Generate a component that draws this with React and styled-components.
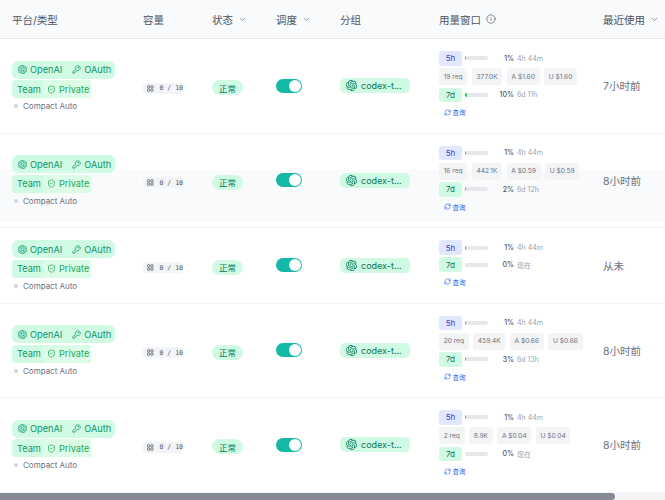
import styled, { createGlobalStyle } from "styled-components";
import { SiOpenai } from "react-icons/si";
import { KeyRound, ShieldCheck, ChevronDown, Info, RefreshCw } from "lucide-react";

const accounts = [
    { last: "7小时前", stats: ["19 req", "377.0K", "A $1.60", "U $1.60"], week: { pct: 10, label: "10%", time: "6d 11h" } },
    { last: "8小时前", stats: ["16 req", "442.1K", "A $0.59", "U $0.59"], week: { pct: 2, label: "2%", time: "6d 12h" }, striped: true },
    { last: "从未", week: { pct: 0, label: "0%", time: "现在" } },
    { last: "8小时前", stats: ["20 req", "459.4K", "A $0.66", "U $0.66"], week: { pct: 3, label: "3%", time: "6d 13h" } },
    { last: "8小时前", stats: ["2 req", "8.9K", "A $0.04", "U $0.04"], week: { pct: 0, label: "0%", time: "现在" } },
];

function SlotsIcon() {
    return (
        <svg width="7" height="7" viewBox="0 0 14 14" fill="none" stroke="currentColor" strokeWidth="1.6">
            <rect x="1" y="1" width="5" height="5" rx="1.5" />
            <rect x="8" y="1" width="5" height="5" rx="1.5" />
            <rect x="1" y="8" width="5" height="5" rx="1.5" />
            <rect x="8" y="8" width="5" height="5" rx="1.5" />
        </svg>
    );
}

export default function App() {
    return (
        <Page>
            <Global />
            <HeaderRow>
                <HeaderCell>平台/类型</HeaderCell>
                <HeaderCell>容量</HeaderCell>
                <HeaderCell>状态 <ChevronDown size={9} /></HeaderCell>
                <HeaderCell>调度 <ChevronDown size={9} /></HeaderCell>
                <HeaderCell>分组</HeaderCell>
                <HeaderCell>用量窗口 <Info size={10} /></HeaderCell>
                <HeaderCell>最近使用 <ChevronDown size={9} /></HeaderCell>
            </HeaderRow>
            {accounts.map((account, i) => (
                <Row key={i} $striped={account.striped}>
                    <Platform>
                        <PillTop>
                            <PillPart><SiOpenai size={9} /> OpenAI</PillPart>
                            <PillPart><KeyRound size={9} /> OAuth</PillPart>
                        </PillTop>
                        <PillBottom>
                            <TeamPart>Team</TeamPart>
                            <PrivatePart><ShieldCheck size={9} /> Private</PrivatePart>
                        </PillBottom>
                        <Compact><Dot />Compact Auto</Compact>
                    </Platform>
                    <div>
                        <Capacity><SlotsIcon /> 0 / 10</Capacity>
                    </div>
                    <div><Status>正常</Status></div>
                    <div><Toggle><Knob /></Toggle></div>
                    <div><Group><SiOpenai size={11} /> codex-t...</Group></div>
                    <Usage>
                        <UsageLine>
                            <WindowTag>5h</WindowTag>
                            <Bar><Fill $pct={1} style={{ width: "1%" }} /></Bar>
                            <Percent>1%</Percent>
                            <Reset>4h 44m</Reset>
                        </UsageLine>
                        {account.stats && (
                            <Stats>
                                {account.stats.map(stat => <Stat key={stat}>{stat}</Stat>)}
                            </Stats>
                        )}
                        <UsageLine>
                            <WindowTag $week>7d</WindowTag>
                            <Bar><Fill $pct={account.week.pct} style={{ width: `${account.week.pct}%` }} /></Bar>
                            <Percent>{account.week.label}</Percent>
                            <Reset>{account.week.time}</Reset>
                        </UsageLine>
                        <Query><RefreshCw size={7} /> 查询</Query>
                    </Usage>
                    <Last>{account.last}</Last>
                </Row>
            ))}
            <ScrollTrack><ScrollThumb /></ScrollTrack>
        </Page>
    );
}

const Global = createGlobalStyle`
    html, body {
        margin: 0;
        overflow: hidden;
        background: #fff;
    }
    * {
        box-sizing: border-box;
    }
`;

const Page = styled.div`
    width: 665px;
    height: 500px;
    display: flex;
    flex-direction: column;
    font-family: Inter, "Noto Sans CJK SC", sans-serif;
`;

const columns = "131px 69px 64px 64px 99px 164px 62px";

const HeaderRow = styled.div`
    flex: none;
    height: 39px;
    padding-left: 12px;
    display: grid;
    grid-template-columns: ${columns};
    align-items: center;
    background: #f9fafb;
    border-bottom: 1px solid #e5e7eb;
`;

const HeaderCell = styled.div`
    display: flex;
    align-items: center;
    gap: 5px;
    font-size: 10.5px;
    color: #4b5563;
    white-space: nowrap;

    svg {
        color: #6b7280;
    }
`;

const Row = styled.div`
    flex: none;
    padding: 12px 0 12px 12px;
    display: grid;
    grid-template-columns: ${columns};
    align-items: center;
    border-bottom: 1px solid #f3f4f6;
    background: ${p => p.$striped
        ? "linear-gradient(#fff 36px, #f9fafb 36px, #f9fafb 88px, #fff 88px)"
        : "#fff"};
`;

const Platform = styled.div`
    display: flex;
    flex-direction: column;
    align-items: flex-start;
`;

const PillTop = styled.div`
    height: 18px;
    padding: 0 4px 0 6px;
    display: flex;
    align-items: center;
    gap: 10px;
    border-radius: 6px;
    background: #d1fae5;
    color: #059669;
    font-size: 9.2px;
`;

const PillPart = styled.span`
    display: flex;
    align-items: center;
    gap: 3px;
`;

const PillBottom = styled.div`
    margin-top: 1.5px;
    height: 18px;
    display: flex;
    font-size: 9.2px;
`;

const TeamPart = styled.span`
    width: 31px;
    padding-left: 5px;
    display: flex;
    align-items: center;
    border-radius: 4px 0 0 4px;
    background: #d1fae5;
    color: #15965f;
`;

const PrivatePart = styled.span`
    width: 48px;
    padding-left: 4px;
    display: flex;
    align-items: center;
    gap: 3px;
    background: #dcfce7;
    color: #22a855;
`;

const Compact = styled.div`
    margin-top: 3px;
    height: 10px;
    display: flex;
    align-items: center;
    gap: 5px;
    font-size: 8px;
    color: #6b7280;
`;

const Dot = styled.span`
    width: 4px;
    height: 4px;
    margin-left: 2px;
    border-radius: 50%;
    background: #cbd5e1;
`;

const Capacity = styled.span`
    width: 40px;
    height: 11px;
    padding-left: 4px;
    display: inline-flex;
    align-items: center;
    gap: 2px;
    border-radius: 4px;
    background: #f3f4f6;
    color: #4b5563;
    font-family: "DejaVu Sans Mono", monospace;
    font-size: 6.5px;
    white-space: pre;
`;

const Status = styled.span`
    width: 31px;
    height: 15px;
    display: inline-flex;
    align-items: center;
    justify-content: center;
    border-radius: 8px;
    background: #d1fae5;
    color: #047857;
    font-size: 8.5px;
`;

const Toggle = styled.span`
    width: 26px;
    height: 14px;
    padding: 1px;
    display: flex;
    justify-content: flex-end;
    border-radius: 7px;
    background: #14b8a6;
`;

const Knob = styled.span`
    width: 12px;
    height: 12px;
    border-radius: 50%;
    background: #fff;
`;

const Group = styled.span`
    width: 70px;
    height: 15px;
    padding-left: 6px;
    display: flex;
    align-items: center;
    gap: 4px;
    border-radius: 5px;
    background: #d1fae5;
    color: #047857;
    font-size: 9px;
    white-space: nowrap;
`;

const Usage = styled.div`
    margin-bottom: 3.5px;
    display: flex;
    flex-direction: column;
    gap: 2.5px;
`;

const UsageLine = styled.div`
    height: 14.5px;
    display: flex;
    align-items: center;
`;

const WindowTag = styled.span`
    width: 23px;
    height: 14.5px;
    display: flex;
    align-items: center;
    justify-content: center;
    border-radius: 3px;
    background: ${p => (p.$week ? "#d1fae5" : "#e0e7ff")};
    color: ${p => (p.$week ? "#047857" : "#4338ca")};
    font-size: 8px;
`;

const Bar = styled.span`
    width: 23px;
    height: 4px;
    margin-left: 3px;
    border-radius: 2px;
    overflow: hidden;
    background: #e5e7eb;
`;

const Fill = styled.span`
    display: block;
    height: 100%;
    min-width: ${p => (p.$pct === 0 ? 0 : "1px")};
    background: #22c55e;
`;

const Percent = styled.span`
    width: 26px;
    text-align: right;
    font-size: 7px;
    font-weight: 500;
    color: #4b5563;
`;

const Reset = styled.span`
    margin-left: 3px;
    font-size: 7px;
    color: #9ca3af;
`;

const Stats = styled.div`
    height: 17px;
    display: flex;
    gap: 4.5px;
`;

const Stat = styled.span`
    padding: 0 4.7px;
    display: flex;
    align-items: center;
    border-radius: 3px;
    background: #f3f4f6;
    color: #6b7280;
    font-size: 6.6px;
    white-space: nowrap;
`;

const Query = styled.div`
    height: 10px;
    margin-top: 2.5px;
    padding-left: 5px;
    display: flex;
    align-items: center;
    gap: 1.5px;
    font-size: 6.5px;
    color: #2563eb;
`;

const Last = styled.div`
    font-size: 10.5px;
    color: #6b7280;
    white-space: nowrap;
`;

const ScrollTrack = styled.div`
    margin-top: auto;
    flex: none;
    height: 7px;
    background: #f3f4f6;
`;

const ScrollThumb = styled.div`
    width: 615px;
    height: 100%;
    border-radius: 0 4px 4px 0;
    background: #868a94;
`;
